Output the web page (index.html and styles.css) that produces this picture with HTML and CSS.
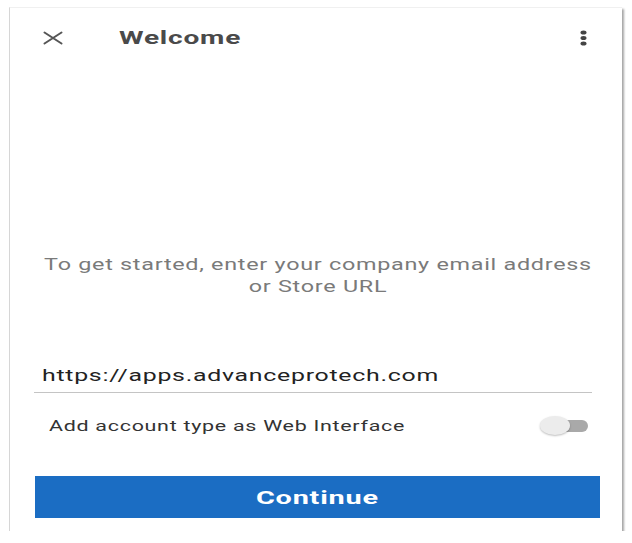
FILE: index.html
```html
<!DOCTYPE html>
<html>
<head>
<meta charset="utf-8">
<link rel="stylesheet" href="styles.css">
</head>
<body>
<div class="card">
  <header class="topbar">
    <svg class="close" width="20" height="14" viewBox="0 0 20 14">
      <path d="M1.5 1.5 L18.5 12.5 M18.5 1.5 L1.5 12.5" stroke="#555" stroke-width="2" stroke-linecap="round"/>
    </svg>
    <h1 class="title"><span class="wide">Welcome</span></h1>
    <svg class="kebab" width="7" height="16" viewBox="0 0 7 16">
      <ellipse cx="3.5" cy="2.5" rx="3" ry="2" fill="#444"/>
      <ellipse cx="3.5" cy="8" rx="3" ry="2" fill="#444"/>
      <ellipse cx="3.5" cy="13.5" rx="3" ry="2" fill="#444"/>
    </svg>
  </header>
  <p class="intro">To get started, enter your company email address<br>or Store URL</p>
  <div class="field"><span class="wide">https://apps.advanceprotech.com</span></div>
  <div class="option">
    <span class="label wide">Add account type as Web Interface</span>
    <span class="switch"><span class="track"></span><span class="thumb"></span></span>
  </div>
  <button class="continue"><span class="wide center">Continue</span></button>
</div>
</body>
</html>
```
FILE: styles.css
```css
html, body {
  margin: 0;
  padding: 0;
  background: #ffffff;
}
body {
  font-family: "Roboto", "Liberation Sans", sans-serif;
}
.wide {
  display: inline-block;
  transform-origin: left center;
}
.wide.center {
  transform-origin: center center;
}
.card {
  box-sizing: border-box;
  margin: 7px 0 0 9px;
  width: 613px;
  height: 524px;
  background: #fff;
  border-left: 1px solid #d6d6d6;
  border-top: 1px solid #f0f0f0;
  box-shadow: 2px 2px 2px rgba(0,0,0,0.35);
  display: flex;
  flex-direction: column;
}
.topbar {
  height: 59px;
  display: flex;
  align-items: center;
  padding: 0 35px 0 33px;
}
.close {
  display: block;
}
.title {
  margin: 0 0 0 56px;
  font-size: 18px;
  font-weight: bold;
  color: #4a4a4a;
  letter-spacing: 0.5px;
  flex: 1;
}
.title .wide {
  transform: scaleX(1.56);
}
.kebab {
  display: block;
}
.intro {
  align-self: center;
  width: 380px;
  margin: 187px 0 0 4px;
  text-align: center;
  font-size: 16px;
  line-height: 22px;
  color: #7a7a7a;
  letter-spacing: 0.5px;
  transform: scaleX(1.46);
  transform-origin: center center;
}
.field {
  margin: 65px 30px 0 24px;
  padding: 0 0 5px 8px;
  font-size: 17px;
  line-height: 24px;
  color: #222;
  letter-spacing: 0.5px;
  border-bottom: 1px solid #c4c4c4;
}
.field .wide {
  transform: scaleX(1.463);
}
.option {
  margin: 21px 34px 0 39px;
  height: 24px;
  display: flex;
  align-items: center;
  justify-content: space-between;
}
.label {
  font-size: 15px;
  color: #333;
  letter-spacing: 0.5px;
}
.label.wide {
  transform: scaleX(1.43);
}
.switch {
  position: relative;
  width: 48px;
  height: 20px;
}
.track {
  position: absolute;
  right: 0;
  top: 4px;
  width: 30px;
  height: 12px;
  border-radius: 6px;
  background: #a9a9a9;
}
.thumb {
  position: absolute;
  left: 0;
  top: 0;
  width: 30px;
  height: 19px;
  border-radius: 50%;
  background: #ececec;
  box-shadow: 0 1px 2px rgba(0,0,0,0.25);
}
.continue {
  margin: 38px 22px 0 25px;
  height: 42px;
  border: none;
  background: #1b6dc3;
  color: #fff;
  font-family: "Roboto", sans-serif;
  font-weight: bold;
  font-size: 18px;
  letter-spacing: 0.5px;
  padding: 0;
}
.continue .wide {
  transform: scaleX(1.6);
}
```
